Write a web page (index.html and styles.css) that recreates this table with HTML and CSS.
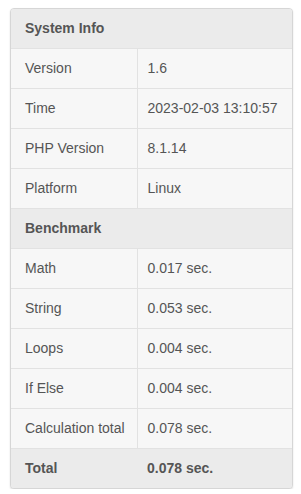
FILE: index.html
```html
<!DOCTYPE html>
<html>
<head>
<meta charset="utf-8">
<link rel="stylesheet" href="styles.css">
</head>
<body>
<div class="panel">
  <table class="info">
    <colgroup><col class="kc"><col></colgroup>
    <tr class="head"><th colspan="2">System Info</th></tr>
    <tr><td class="k">Version</td><td>1.6</td></tr>
    <tr><td class="k">Time</td><td>2023-02-03 13:10:57</td></tr>
    <tr><td class="k">PHP Version</td><td>8.1.14</td></tr>
    <tr><td class="k">Platform</td><td>Linux</td></tr>
    <tr class="head"><th colspan="2">Benchmark</th></tr>
    <tr><td class="k">Math</td><td>0.017 sec.</td></tr>
    <tr><td class="k">String</td><td>0.053 sec.</td></tr>
    <tr><td class="k">Loops</td><td>0.004 sec.</td></tr>
    <tr><td class="k">If Else</td><td>0.004 sec.</td></tr>
    <tr><td class="k">Calculation total</td><td>0.078 sec.</td></tr>
    <tr class="total"><th class="k">Total</th><th>0.078 sec.</th></tr>
  </table>
</div>
</body>
</html>
```

FILE: styles.css
```css
html, body { margin: 0; background: #fff; }
body {
  padding: 8px 8px 0 10px;
  font-family: "Liberation Sans", Arial, sans-serif;
  font-size: 14px;
  color: #555;
}
.panel {
  width: 281px;
  border: 1px solid #d6d6d6;
  border-radius: 4px;
  box-shadow: 0 1px 2px rgba(0,0,0,0.12);
  overflow: hidden;
  background: #f7f7f7;
}
.info {
  width: 100%;
  border-collapse: collapse;
  table-layout: fixed;
}
.info .kc { width: 126px; }
.info td, .info th {
  padding: 10px 10px;
  line-height: 19px;
  text-align: left;
  white-space: nowrap;
  border-top: 1px solid #e2e2e2;
}
.info .k, .info .head th { padding-left: 14px; }
.info tr:first-child th { border-top: 0; }
.info td.k { border-right: 1px solid #e2e2e2; }
.info .head th {
  background: #ebebeb;
  font-weight: bold;
}
.info .total th {
  background: #ebebeb;
  font-weight: bold;
}
```
